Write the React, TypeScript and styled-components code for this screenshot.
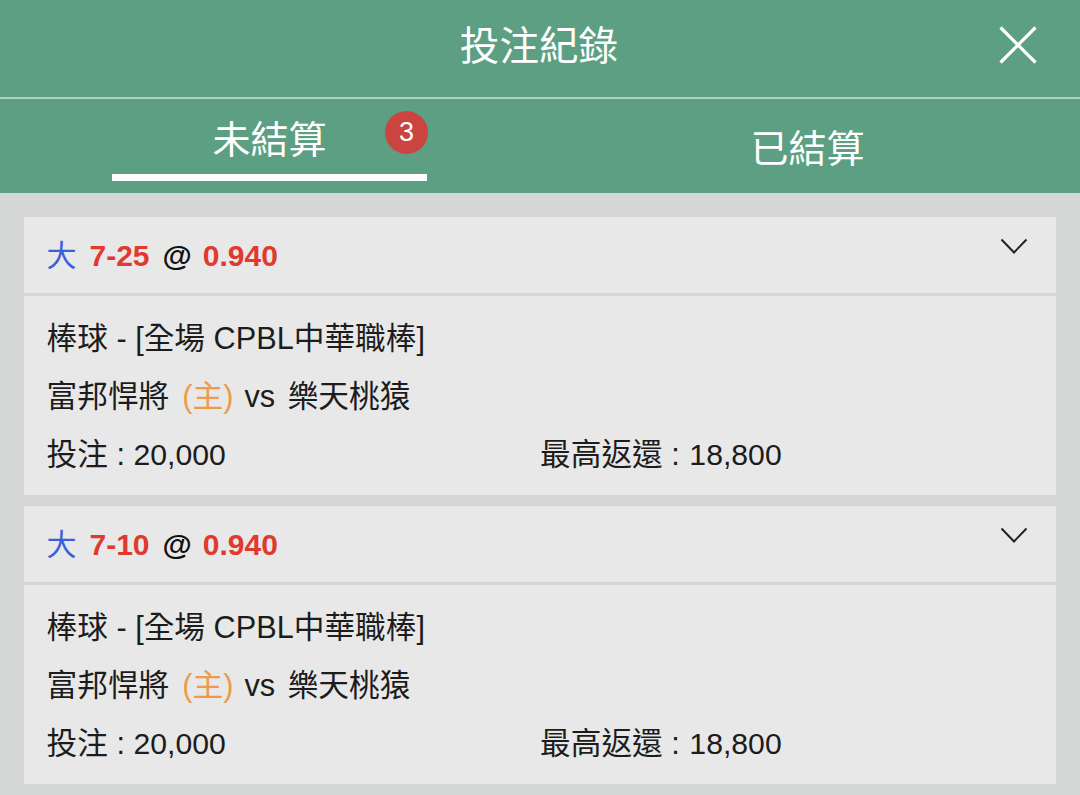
import * as React from 'react';
import styled, { createGlobalStyle } from 'styled-components';

const GlobalStyle = createGlobalStyle`
    html, body {
        margin: 0;
        padding: 0;
        background: #d5d7d6;
    }
    body {
        font-family: "Liberation Sans", "Noto Sans CJK TC", sans-serif;
    }
`;

type Bet = {
    score: string
};

const bets: Bet[] = [{ score: '7-25' }, { score: '7-10' }];

const Page = styled.div`
    width: 1080px;
    height: 795px;
    overflow: hidden;
    background: #d5d7d6;
`;

const TitleBar = styled.header`
    position: relative;
    height: 97px;
    display: flex;
    align-items: center;
    justify-content: center;
    background: #5c9f82;
    border-bottom: 2px solid #b4d0c3;
`;

const Title = styled.h1`
    margin: 0 2px 0 0;
    font-size: 39.6px;
    font-weight: 400;
    line-height: 1;
    color: #fff;
    transform: translateY(-2px);
`;

const CloseButton = styled.button`
    position: absolute;
    top: 26px;
    right: 43px;
    width: 38px;
    height: 38px;
    padding: 0;
    border: none;
    background: none;
    color: #fff;
`;

const Tabs = styled.nav`
    height: 94px;
    display: grid;
    grid-template-columns: 539px 537px;
    background: #5c9f82;
`;

const TabCell = styled.div`
    display: flex;
    justify-content: center;
`;

const Tab = styled.div<{ $active?: boolean }>`
    position: relative;
    width: 315px;
    height: 82px;
    box-sizing: border-box;
    padding-top: ${props => props.$active ? '20px' : '29px'};
    text-align: center;
    font-size: 38px;
    line-height: 42px;
    color: #fff;
    border-bottom: 7px solid ${props => props.$active ? '#fff' : 'transparent'};
`;

const Badge = styled.span`
    position: absolute;
    top: 12px;
    right: -1px;
    width: 43px;
    height: 43px;
    border-radius: 50%;
    background: #cb4440;
    color: #fff;
    font-size: 27px;
    line-height: 42px;
    text-align: center;
`;

const List = styled.main`
    display: flex;
    flex-direction: column;
    gap: 11px;
    padding: 24px 24px 0;
`;

const Card = styled.article`
    background: #e8e8e8;
`;

const CardHead = styled.div`
    height: 79px;
    box-sizing: border-box;
    display: flex;
    align-items: center;
    justify-content: space-between;
    padding: 0 28px 0 23px;
    border-bottom: 3px solid #d5d7d6;
`;

const Odds = styled.div`
    font-size: 30px;
    font-weight: 700;
    white-space: nowrap;
    display: flex;
    align-items: baseline;
    gap: 13px;
    margin-top: -5px;
`;

const Over = styled.span`
    margin-left: -0.5px;
    color: #3a5fd9;
    font-weight: 400;
`;

const Red = styled.span`
    color: #e03a2e;
`;

const At = styled.span`
    color: #111;
    margin-right: -2px;
`;

const Chevron = styled.svg`
    width: 28px;
    height: 17px;
    margin-top: -17px;
    color: #222;
`;

const CardBody = styled.div`
    height: 199px;
    box-sizing: border-box;
    padding: 21.5px 22.5px 0;
    display: flex;
    flex-direction: column;
    gap: 16px;
    font-size: 30.7px;
    line-height: 42px;
    color: #1c1c1c;
`;

const Line = styled.div`
    white-space: nowrap;
`;

const Home = styled.span`
    margin-left: 4.5px;
    color: #ee9a4d;
`;

const Versus = styled.span`
    margin: 0 4px 0 2.5px;
`;

const Amounts = styled.div`
    display: grid;
    grid-template-columns: 493.5px 1fr;
    white-space: nowrap;
`;

const Amount = styled.span<{ $offset?: boolean }>`
    margin-left: ${props => props.$offset ? '1px' : '0'};
    font-size: 30.2px;
`;

export default function App() {
    return (
        <Page>
            <GlobalStyle />
            <TitleBar>
                <Title>投注紀錄</Title>
                <CloseButton aria-label="關閉">
                    <svg width="38" height="38" viewBox="0 0 38 38" fill="none" stroke="currentColor" strokeWidth="3.2">
                        <path d="M1.5 1.5 36.5 36.5M36.5 1.5 1.5 36.5" />
                    </svg>
                </CloseButton>
            </TitleBar>
            <Tabs>
                <TabCell>
                    <Tab $active>
                        未結算
                        <Badge>3</Badge>
                    </Tab>
                </TabCell>
                <TabCell>
                    <Tab>已結算</Tab>
                </TabCell>
            </Tabs>
            <List>
                {bets.map(bet => (
                    <Card key={bet.score}>
                        <CardHead>
                            <Odds>
                                <Over>大</Over>
                                <Red>{bet.score}</Red>
                                <At>@</At>
                                <Red>0.940</Red>
                            </Odds>
                            <Chevron viewBox="0 0 28 17" fill="none" stroke="currentColor" strokeWidth="2">
                                <path d="M1.5 1.5 14 14.5 26.5 1.5" />
                            </Chevron>
                        </CardHead>
                        <CardBody>
                            <Line>棒球 - [全場 CPBL中華職棒]</Line>
                            <Line>富邦悍將 <Home>(主)</Home> <Versus>vs</Versus> 樂天桃猿</Line>
                            <Amounts>
                                <span>投注 : <Amount>20,000</Amount></span>
                                <span>最高返還 : <Amount $offset>18,800</Amount></span>
                            </Amounts>
                        </CardBody>
                    </Card>
                ))}
            </List>
        </Page>
    );
}
